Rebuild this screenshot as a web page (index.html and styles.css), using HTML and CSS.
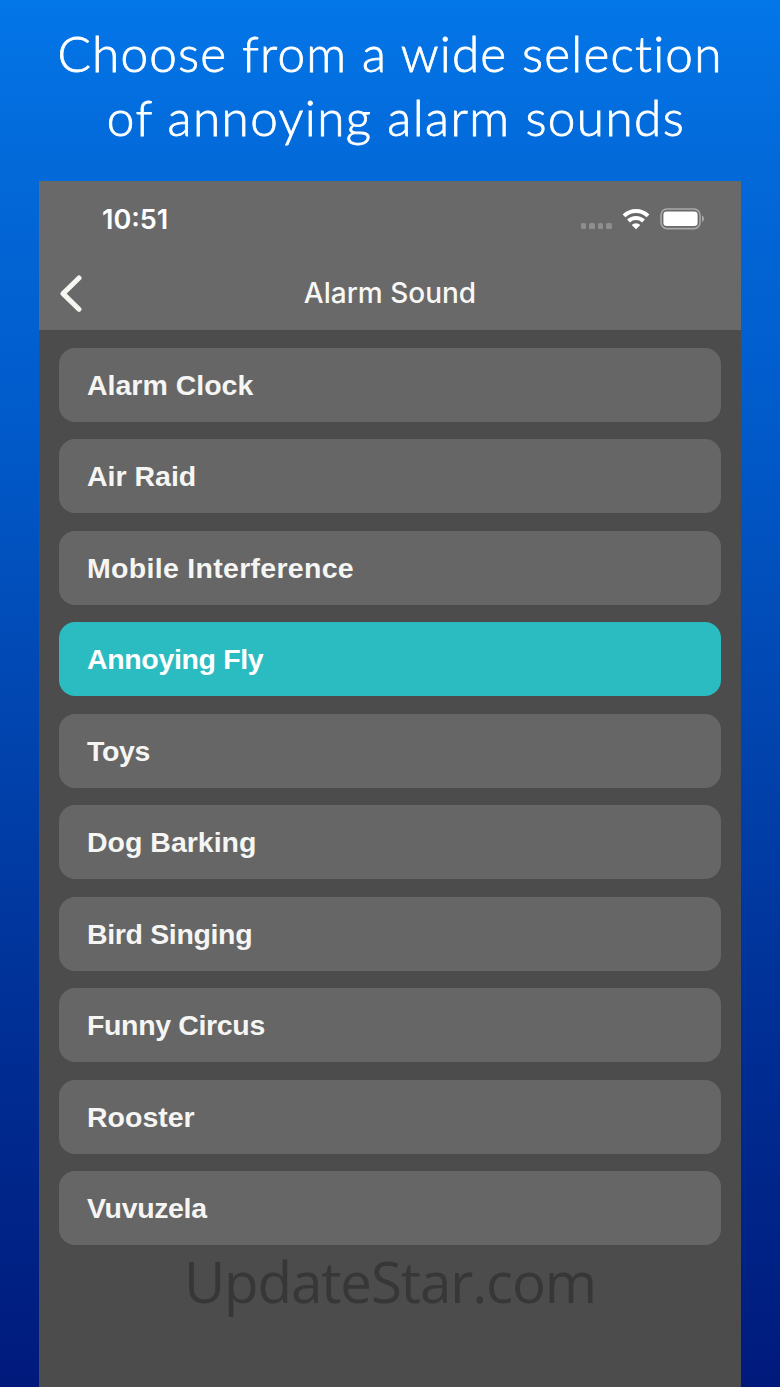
FILE: index.html
```html
<!DOCTYPE html>
<html lang="en">
<head>
  <meta charset="UTF-8" />
  <meta name="viewport" content="width=device-width, initial-scale=1.0"/>
  <title>Alarm Sound</title>
  <link rel="stylesheet" href="styles.css">
</head>
<body>
  <h1 class="headline"><span class="line-one">Choose from a wide selection</span><br><span class="line-two">of annoying alarm sounds</span></h1>

  <div class="phone">
    <header class="top">
      <div class="status-bar">
        <span class="time">10:51</span>
        <div class="status-icons">
          <div class="dots"><i></i><i></i><i></i><i></i></div>
          <svg class="wifi" width="28" height="22" viewBox="0 0 28 22">
            <g fill="none" stroke="#fff" stroke-width="4">
              <path d="M2 7.9a17 17 0 0 1 24 0"/>
              <path d="M6.5 13a10.7 10.7 0 0 1 15 0"/>
            </g>
            <path d="M14 21.3l-4.3-4.3a6 6 0 0 1 8.6 0z" fill="#fff"/>
          </svg>
          <svg class="battery" width="45" height="22" viewBox="0 0 45 22">
            <rect x="1" y="1" width="39" height="19.6" rx="6" fill="none" stroke="#a9a9a9" stroke-width="1.6"/>
            <rect x="3.4" y="3.5" width="34.2" height="14.6" rx="3.3" fill="#fff"/>
            <path d="M42 7.5c2.6 1.2 2.6 5.4 0 6.6z" fill="#a9a9a9"/>
          </svg>
        </div>
      </div>
      <div class="nav-bar">
        <svg class="back" width="24" height="38" viewBox="0 0 24 38">
          <path d="M20 3L4 18.6 20 34.2" fill="none" stroke="#f7f7f2" stroke-width="5" stroke-linecap="round" stroke-linejoin="round"/>
        </svg>
        <h2 class="title">Alarm Sound</h2>
      </div>
    </header>

    <ul class="sounds">
      <li>Alarm Clock</li>
      <li>Air Raid</li>
      <li class="wide">Mobile Interference</li>
      <li class="selected tight">Annoying Fly</li>
      <li class="tight">Toys</li>
      <li>Dog Barking</li>
      <li class="tight">Bird Singing</li>
      <li class="tight">Funny Circus</li>
      <li>Rooster</li>
      <li class="tight">Vuvuzela</li>
    </ul>

    <div class="watermark">UpdateStar.com</div>
  </div>
</body>
</html>
```
FILE: styles.css
```css
* {
  box-sizing: border-box;
}

body {
  margin: 0;
  height: 1387px;
  overflow: hidden;
  background: linear-gradient(#0376e8 0%, #0368d8 13%, #015bcb 30%, #0142ac 55%, #002e94 75%, #001a7c 100%);
  font-family: "Liberation Sans", Arial, sans-serif;
}

.headline {
  margin: 0;
  height: 181px;
  padding-top: 21px;
  font-family: Lato, sans-serif;
  font-weight: 300;
  font-size: 49.5px;
  line-height: 64px;
  text-align: center;
  white-space: nowrap;
  color: #fff;
  -webkit-text-stroke: 0.8px #fff;
}

.line-one {
  letter-spacing: 1.2px;
}

.line-two {
  padding-left: 12px;
  letter-spacing: 1.4px;
}

.phone {
  width: 702px;
  height: 1206px;
  margin-left: 39px;
  background: #4c4c4c;
}

.top {
  height: 149px;
  background: #696969;
  color: #f7f7f5;
}

.status-bar {
  display: flex;
  justify-content: space-between;
  align-items: center;
  height: 76px;
  padding: 0 36px 0 63px;
}

.time {
  padding-top: 1px;
  font-family: Inter, sans-serif;
  font-weight: 600;
  font-size: 27px;
  color: #fff;
}

.status-icons {
  display: flex;
  align-items: center;
}

.dots {
  display: flex;
  gap: 3px;
  margin: 14px 10px 0 0;
}

.dots i {
  width: 5.6px;
  height: 5.6px;
  border-radius: 1.5px;
  background: #8e8e8e;
}

.wifi {
  margin-right: 10px;
}

.nav-bar {
  display: grid;
  grid-template-columns: 60px 1fr 60px;
  align-items: center;
  height: 73px;
}

.back {
  margin-left: 20px;
}

.title {
  margin: 0;
  padding-bottom: 1px;
  font-family: Inter, sans-serif;
  font-weight: 500;
  font-size: 28px;
  text-align: center;
}

.sounds {
  display: flex;
  flex-direction: column;
  gap: 17.5px;
  margin: 0;
  padding: 17.5px 20px 0;
  list-style: none;
}

.sounds li {
  height: 74px;
  padding-left: 28px;
  border-radius: 16px;
  background: #666;
  color: #f5f5f3;
  font-weight: bold;
  font-size: 28.5px;
  line-height: 74px;
}

.sounds .selected {
  background: #2bbcc2;
  color: #fff;
}

.sounds .tight {
  letter-spacing: -0.35px;
}

.sounds .wide {
  letter-spacing: 0.3px;
}

.watermark {
  font-family: "Open Sans", sans-serif;
  font-size: 56.5px;
  line-height: 74px;
  letter-spacing: -1.1px;
  text-align: center;
  color: #373737;
}
```
